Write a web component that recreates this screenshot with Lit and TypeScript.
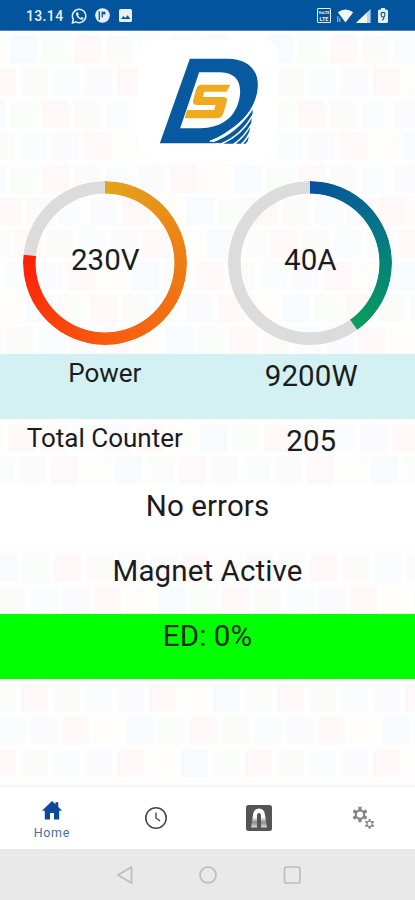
import { LitElement, html, css, svg } from "lit";
import { customElement, property } from "lit/decorators.js";

// Tile colours repeat every eight tiles along a row.
const TILE_COLORS = ["#fef9f8", "#fbfbfa", "#f9fdfe", "#fbfbfd", "#fef8f8", "#fefdfa", "#f7fbfd", "#fbfdfa"];
const TILE_PITCH = 32;
const ROW_PITCH = 32.45;
const ROW_OFFSETS = [74, 245, 42, 212, 42, 250, 15, 196, 90, 230, 60, 150, 8, 179, 120, 30, 54, 222, 100, 160, 21, 190, 245];

@customElement("tile-backdrop")
class TileBackdrop extends LitElement {
  static styles = css`
    :host { display: block; overflow: hidden; }
    svg { display: block; }
  `;
  render() {
    const tiles = ROW_OFFSETS.flatMap((offset, row) =>
      Array.from({ length: 24 }, (_, i) => {
        const x = offset - 256 + i * TILE_PITCH;
        if (x < -28 || x > 415) return null;
        return svg`<rect x=${x} y=${4 + row * ROW_PITCH} width="27" height="28" rx="1" fill=${TILE_COLORS[i % 8]}></rect>`;
      })
    );
    return html`<svg width="415" height="756" viewBox="0 0 415 756">${tiles}</svg>`;
  }
}

@customElement("ring-gauge")
class RingGauge extends LitElement {
  @property() label = "";
  @property({ type: Number }) percent = 0;
  @property() colors = "";

  static styles = css`
    :host { display: grid; width: 164px; height: 164px; }
    .ring, .label { grid-area: 1 / 1; }
    .ring {
      border-radius: 50%;
      -webkit-mask: radial-gradient(circle, transparent 69px, #000 69.8px);
      mask: radial-gradient(circle, transparent 69px, #000 69.8px);
    }
    .label {
      place-self: center;
      font-size: 29.5px;
      line-height: 34px;
      padding-bottom: 6px;
    }
  `;
  render() {
    const paint = `conic-gradient(${this.colors} ${this.percent}%, #dcdcdc ${this.percent + 0.2}% 99.9%)`;
    return html`
      <div class="ring" style="background:${paint}"></div>
      <div class="label">${this.label}</div>
    `;
  }
}

@customElement("app-root")
class AppRoot extends LitElement {
  static styles = css`
    :host {
      display: flex;
      flex-direction: column;
      width: 415px;
      height: 900px;
      background: #fff;
      color: #1c1c1c;
      font-family: Roboto, "Liberation Sans", sans-serif;
      overflow: hidden;
    }
    svg { display: block; flex: none; }
    .status {
      flex: none;
      height: 31px;
      box-sizing: border-box;
      padding: 1px 26px 0 26px;
      display: flex;
      align-items: center;
      justify-content: space-between;
      background: #02549c;
      color: #e8f1fa;
      border-bottom: 1px solid #5583b8;
    }
    .time { font-size: 14px; font-weight: 500; letter-spacing: 0.35px; line-height: 16px; }
    .content { flex: none; height: 756px; display: grid; }
    .backdrop, .screen { grid-area: 1 / 1; min-width: 0; }
    .backdrop { background: #fefefe; }
    .screen { z-index: 1; display: flex; flex-direction: column; }
    .logo { align-self: center; margin-top: 9px; background: #fff; border-radius: 14px; }
    .gauges { display: grid; grid-template-columns: 1fr 1fr; margin-top: 21px; margin-bottom: 9px; }
    .gauges ring-gauge { justify-self: center; }
    .gauges ring-gauge:first-child { margin-left: 3px; }
    .gauges ring-gauge:last-child { margin-right: 2px; }
    .row {
      flex: none;
      height: 65px;
      box-sizing: border-box;
      padding-top: 5px;
      display: grid;
      grid-template-columns: 1fr 1fr;
      text-align: center;
      font-size: 29.5px;
      line-height: 34px;
      letter-spacing: 0.1px;
    }
    .row.single { grid-template-columns: 1fr; }
    .name { font-size: 26px; line-height: 28px; padding-left: 2px; letter-spacing: 0; }
    .power { background: #d3f1f2; }
    .plain { background: #fff; }
    .duty { background: #00ff00; color: #0c300c; }
    .tabs {
      flex: none;
      height: 62px;
      display: grid;
      grid-template-columns: repeat(4, 1fr);
      place-items: center;
      background: #fff;
      box-shadow: 0 -1px 2px #eeeeee;
      z-index: 2;
    }
    .tab { display: flex; flex-direction: column; align-items: center; }
    .home { gap: 5px; padding-top: 6px; color: #42729e; font-size: 12.5px; line-height: 16px; letter-spacing: 0.6px; }
    .system {
      flex: none;
      height: 51px;
      background: #e9e9e9;
      display: flex;
      justify-content: center;
      align-items: center;
      gap: 64px;
      padding-left: 2px;
    }
    .left, .right { display: flex; align-items: center; }
    .left svg:nth-of-type(1) { margin-left: 8px; }
    .left svg:nth-of-type(2) { margin-left: 7px; }
    .left svg:nth-of-type(3) { margin-left: 9px; }
    .right { padding-right: 1px; }
    .right .wifi { margin-left: 6px; }
    .right .signal { margin-left: 2px; }
    .right .battery { margin-left: 7px; }
    .lte {
      width: 14px;
      height: 15px;
      box-sizing: border-box;
      border: 1.5px solid #e8f1fa;
      border-radius: 1px;
      display: flex;
      flex-direction: column;
      align-items: center;
      justify-content: center;
      font-size: 5.5px;
      line-height: 6px;
      font-weight: 700;
      white-space: nowrap;
    }
    .lte .wide { font-size: 4px; }
  `;

  renderStatus() {
    return html`
      <div class="status">
        <div class="left">
          <span class="time">13.14</span>
          <svg width="17" height="16" viewBox="0 0 17 16">
            <path d="M1.3 15 2.4 11.5A6.7 6.7 0 1 1 5 13.9Z" fill="none" stroke="#e8f1fa" stroke-width="1.5" stroke-linejoin="round"></path>
            <path d="M5.3 4.6 6.8 4.2 7.9 6.4 7.1 7.4Q8 9.2 9.7 9.9L10.7 9 12.6 10.1Q12.1 12 10.2 11.7 5.7 10.2 5 6.3Z" fill="#e8f1fa"></path>
          </svg>
          <svg width="15" height="15" viewBox="0 0 15 15">
            <circle cx="7.5" cy="7.5" r="7.3" fill="#e8f1fa"></circle>
            <path d="M4.3 3.200v8.700M7.200 3.400v6" stroke="#02549c" stroke-width="1.300"></path>
            <circle cx="9.100" cy="4.900" r="1.500" fill="#02549c"></circle>
          </svg>
          <svg width="13" height="13" viewBox="0 0 13 13">
            <rect width="13" height="13" rx="1.500" fill="#e8f1fa"></rect>
            <path d="M2 10 4.500 7.100 6.300 9 8.700 6.200 11.300 10Z" fill="#02549c"></path>
          </svg>
        </div>
        <div class="right">
          <div class="lte"><span class="wide">VoLTE</span><span>LTE</span></div>
          <svg class="wifi" width="17" height="14" viewBox="0 0 17 14">
            <path d="M.8 3.200Q8.500-2.400 16.200 3.200L8.500 13.600Z" fill="#f3f8fc"></path>
            <path d="M.8 7v6M2.800 9v4" stroke="#a9c6e0" stroke-width="1"></path>
          </svg>
          <svg class="signal" width="15" height="14" viewBox="0 0 15 14">
            <path d="M0 14 14.600 0V14Z" fill="#bad0e5"></path>
            <path d="M0 14 11 3.500V14Z" fill="#f3f8fc"></path>
          </svg>
          <svg class="battery" width="10" height="15" viewBox="0 0 10 15">
            <path d="M3 0h4v1.500h1.500Q10 1.500 10 3v10.500Q10 15 8.500 15h-7Q0 15 0 13.500V3Q0 1.500 1.500 1.500H3Z" fill="#e8f1fa"></path>
            <path d="M3.200 5v2.500Q3.200 9 5 9T6.800 7.500V5Q5 3.700 3.200 5ZM5.800 9v1.500L4.300 12.300" fill="none" stroke="#02549c" stroke-width="1.100"></path>
          </svg>
        </div>
      </div>
    `;
  }

  renderLogo() {
    return html`
      <svg class="logo" width="140" height="120" viewBox="-7.5 0 420 360">
        <path fill="#075a9f" fill-rule="evenodd" d="M148 56H262C320 57 353 87 352 137C350 190 318 236 272 266Q245 287 208 303L228 310H58ZM176 97 119 265H180C240 264 279 235 293 190C309 137 293 98 240 97Z"></path>
        <path fill="#f0aa20" d="M181 134H270L258 155H191L187 171H250Q262 172 259 184L249 219Q244 235 229 235H132L140 210H221L225 195H168Q155 194 158 181L166 151Q170 136 181 134Z"></path>
        <path fill="#075a9f" d="M215 308Q292 280 337 207L336 222Q302 285 240 310ZM249 311Q305 286 334 235L332 250Q309 292 278 311ZM286 311Q312 293 329 262L326 276Q315 299 301 311ZM308 311Q319 301 325 289L322 303L315 311Z"></path>
        <path fill="none" stroke="#fff" stroke-width="4" d="M208 304Q285 280 337 205"></path>
      </svg>
    `;
  }

  renderTabs() {
    const gear = (cx: number, cy: number, r: number, hole: number, w: number) => svg`
      <g transform="translate(${cx} ${cy})">
        <circle r=${(r + hole) / 2 - 0.3} fill="none" stroke="#858585" stroke-width=${r - hole - 0.6}></circle>
        ${[0, 60, 120, 180, 240, 300].map(
          (a) => svg`<rect x=${-w / 2} y=${-r - w * 0.55} width=${w} height=${w} rx=".4" fill="#858585" transform="rotate(${a})"></rect>`
        )}
      </g>`;
    return html`
      <div class="tabs">
        <div class="tab home">
          <svg width="20" height="19" viewBox="0 0 20 19">
            <path fill="#08499a" d="M10 0 13.500 3.300V1.300H16.300V6L20 9.800H17.200V18.600H12V12H8V18.600H2.800V9.800H0Z"></path>
          </svg>
          <span>Home</span>
        </div>
        <div class="tab">
          <svg width="24" height="24" viewBox="0 0 24 24" fill="none" stroke="#494949">
            <circle cx="12" cy="12" r="10.200" stroke-width="1.600"></circle>
            <path d="M12 6.500V12L16 15" stroke-width="1.400"></path>
          </svg>
        </div>
        <div class="tab">
          <svg width="26" height="26" viewBox="0 0 26 26">
            <defs>
              <linearGradient id="steel" x1="0" y1="0" x2="0" y2="1">
                <stop offset=".45" stop-color="#fff"></stop>
                <stop offset=".72" stop-color="#8c8c8c"></stop>
                <stop offset="1" stop-color="#d6d6d6"></stop>
              </linearGradient>
            </defs>
            <rect width="26" height="26" rx="2.500" fill="#555"></rect>
            <path d="M5 22.500 7 10Q7.500 3.500 13 3.500T19 10L21 22.500H15V11Q15 8 13 8T11 11V22.500Z" fill="url(#steel)"></path>
          </svg>
        </div>
        <div class="tab">
          <svg width="24" height="24" viewBox="0 0 24 24">${gear(9, 8.5, 5.9, 3.1, 3.2)}${gear(18.6, 17.9, 3.8, 2.1, 2)}</svg>
        </div>
      </div>
    `;
  }

  render() {
    return html`
      ${this.renderStatus()}
      <div class="content">
        <tile-backdrop class="backdrop"></tile-backdrop>
        <div class="screen">
          ${this.renderLogo()}
          <div class="gauges">
            <ring-gauge label="230V" .percent=${76.5} colors="#e4a41a 0%, #ed7d15 25%, #f75c0f 50%, #ff1d08"></ring-gauge>
            <ring-gauge label="40A" .percent=${40.1} colors="#07509f 0%, #047b82 20%, #099d5d"></ring-gauge>
          </div>
          <div class="row power"><span class="name">Power</span><span>9200W</span></div>
          <div class="row"><span class="name">Total Counter</span><span>205</span></div>
          <div class="row single plain">No errors</div>
          <div class="row single">Magnet Active</div>
          <div class="row single duty">ED: 0%</div>
        </div>
      </div>
      ${this.renderTabs()}
      <div class="system">
        <svg width="18" height="20" viewBox="0 0 18 20"><path d="M2 10 15.500 2V18Z" fill="none" stroke="#bdbdbd" stroke-width="1.700" stroke-linejoin="round"></path></svg>
        <svg width="20" height="20" viewBox="0 0 20 20"><circle cx="10" cy="10" r="8" fill="none" stroke="#bdbdbd" stroke-width="1.700"></circle></svg>
        <svg width="20" height="20" viewBox="0 0 20 20"><rect x="2.500" y="2" width="15.500" height="16" rx="2" fill="none" stroke="#bdbdbd" stroke-width="1.700"></rect></svg>
      </div>
    `;
  }
}
